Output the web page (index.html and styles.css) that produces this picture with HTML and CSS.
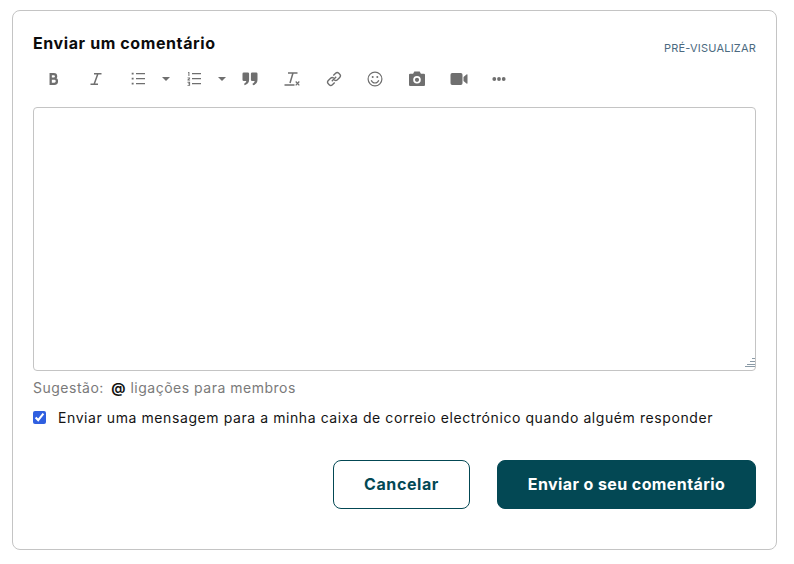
FILE: index.html
```html
<!DOCTYPE html>
<html lang="pt">
<head>
<meta charset="utf-8">
<title>Enviar um comentário</title>
<link rel="stylesheet" href="styles.css">
</head>
<body>
<form class="card">
  <div class="head">
    <h2 class="title">Enviar um comentário</h2>
    <a class="preview">PRÉ-VISUALIZAR</a>
  </div>
  <div class="toolbar">
    <span class="tool"><svg width="16" height="16" viewBox="0 0 16 16"><path fill="none" stroke="#6f6f6f" stroke-width="2.3" d="M4.700 2v12M4 3.100h3.800a2.200 2.200 0 0 1 0 4.600H4.700M4.700 7.700h3.600a2.600 2.600 0 0 1 0 5.200H4"/></svg></span>
    <span class="tool"><svg width="16" height="16" viewBox="0 0 16 16"><path fill="none" stroke="#6f6f6f" stroke-width="1.5" d="M6 2.700h7.500M2.500 13.300h7.500M9.900 2.700 6.100 13.300"/></svg></span>
    <span class="tool"><svg width="16" height="16" viewBox="0 0 16 16"><path fill="#6f6f6f" d="M1.700 1.800h1.900v1.700H1.700zM1.700 6.800h1.900v1.700H1.700zM1.700 11.800h1.900v1.700H1.700zM6 2h9v1.300H6zM6 7h9v1.300H6zM6 12h9v1.300H6z"/></svg></span>
    <span class="caret"></span>
    <span class="tool"><svg width="16" height="16" viewBox="0 0 16 16"><path fill="#6f6f6f" d="M6 2h9v1.300H6zM6 7h9v1.300H6zM6 12h9v1.300H6zM2.200 1h1.200v4H2.400V2H2zM1.500 6.500h2.600v.9L2.700 8.600h1.400v.8H1.500v-.8L3 7.300H1.500zM1.500 10.800h2.600v4H1.500V14h1.600v-.7H2v-.7h1.100v-.9H1.500z"/></svg></span>
    <span class="caret"></span>
    <span class="tool"><svg width="16" height="16" viewBox="0 0 16 16"><path fill="#6f6f6f" d="M1.800 1.500h4a1.300 1.300 0 0 1 1.300 1.300v6c0 2.800-1.600 4.600-4.400 5.400l-.7-1.500c1.400-.6 2.200-1.500 2.300-2.700H1.800A1.300 1.300 0 0 1 .5 8.700V2.800a1.300 1.300 0 0 1 1.300-1.300zM10.200 1.500h4a1.300 1.300 0 0 1 1.300 1.300v6c0 2.800-1.600 4.600-4.400 5.400l-.7-1.500c1.400-.6 2.200-1.500 2.300-2.700h-2.500a1.300 1.300 0 0 1-1.300-1.300V2.800a1.300 1.300 0 0 1 1.300-1.300z"/></svg></span>
    <span class="tool"><svg width="18" height="16" viewBox="0 0 18 16"><path fill="none" stroke="#6f6f6f" stroke-width="1.500" d="M5 2h9.500M10 2 7 12M1.500 14h10"/><path fill="none" stroke="#6f6f6f" stroke-width="1.200" d="m12.700 10.500 3.600 3.800M16.300 10.500l-3.600 3.800"/></svg></span>
    <span class="tool"><svg width="16" height="16" viewBox="0 0 16 16"><g fill="none" stroke="#6f6f6f" stroke-width="1.400"><path d="M7.300 4.600 9.600 2.300a2.300 2.300 0 0 1 3.200 0l.9.9a2.300 2.300 0 0 1 0 3.200l-2.300 2.300a2.300 2.300 0 0 1-3.200 0"/><path d="M8.700 11.400 6.400 13.700a2.300 2.300 0 0 1-3.200 0l-.9-.9a2.300 2.300 0 0 1 0-3.200l2.300-2.300a2.300 2.300 0 0 1 3.200 0"/><path d="m5.800 10.200 4.400-4.400"/></g></svg></span>
    <span class="tool tool-narrow"><svg width="16" height="16" viewBox="0 0 16 16"><circle cx="8" cy="8" r="6.900" fill="none" stroke="#6f6f6f" stroke-width="1.200"/><circle cx="5.700" cy="6" r="1" fill="#6f6f6f"/><circle cx="10.300" cy="6" r="1" fill="#6f6f6f"/><path fill="none" stroke="#6f6f6f" stroke-width="1.200" d="M4.200 9.300c.7 1.800 2.100 2.700 3.800 2.700s3.100-.9 3.800-2.700"/></svg></span>
    <span class="tool"><svg width="18" height="16" viewBox="0 0 18 16"><path fill="#6f6f6f" fill-rule="evenodd" d="M6.300 .5h5.400l1.200 2.200h3A1.100 1.100 0 0 1 17 3.800v10.100a1.100 1.100 0 0 1-1.100 1.100H2.100A1.100 1.100 0 0 1 1 13.900V3.800a1.100 1.100 0 0 1 1.100-1.100h3zM9 5a3.800 3.800 0 1 0 0 7.600A3.800 3.800 0 0 0 9 5zM9 6.700a2.100 2.100 0 1 1 0 4.200 2.100 2.100 0 0 1 0-4.200z"/></svg></span>
    <span class="tool"><svg width="18" height="16" viewBox="0 0 18 16"><path fill="#6f6f6f" d="M2.200 2h8.600a1.700 1.700 0 0 1 1.700 1.700v8.600a1.700 1.700 0 0 1-1.700 1.700H2.200a1.700 1.700 0 0 1-1.700-1.700V3.700A1.700 1.700 0 0 1 2.200 2zM13.500 6l3-2.600a.6.6 0 0 1 1 .4v8.400a.6.6 0 0 1-1 .4l-3-2.600z"/></svg></span>
    <span class="tool tool-dots"><svg width="14" height="16" viewBox="0 0 14 16"><circle cx="2.300" cy="8" r="1.900" fill="#6f6f6f"/><circle cx="7" cy="8" r="1.900" fill="#6f6f6f"/><circle cx="11.700" cy="8" r="1.900" fill="#6f6f6f"/></svg></span>
  </div>
  <div class="editor">
    <textarea class="input"></textarea>
    <svg class="grip" width="11" height="12" viewBox="0 0 11 12"><path fill="#8a9aa6" d="M8 0h3v1H8zM6 3h5v1H6zM3 6h8v1H3zM1 8h10v1H1z"/></svg>
  </div>
  <p class="hint">Sugestão: <b class="at">@</b> ligações para membros</p>
  <label class="notify"><input class="check" type="checkbox" checked><span>Enviar uma mensagem para a minha caixa de correio electrónico quando alguém responder</span></label>
  <div class="actions">
    <button type="button" class="btn btn-ghost">Cancelar</button>
    <button type="button" class="btn btn-solid">Enviar o seu comentário</button>
  </div>
</form>
</body>
</html>
```
FILE: styles.css
```css
html, body { margin: 0; padding: 0; background: #fff; }
body { font-family: Inter, "Open Sans", sans-serif; width: 794px; height: 564px; overflow: hidden; color: #111; }
.card { box-sizing: border-box; width: 765px; height: 540px; margin: 10px 0 0 12px; padding: 22px 20px 40px 20px; border: 1px solid #c4c4c4; border-radius: 8px; }
.head { display: flex; justify-content: space-between; align-items: flex-start; height: 31px; }
.title { margin: 0; font-size: 16px; line-height: 21px; font-weight: 700; color: #0c0c0c; letter-spacing: .6px; }
.preview { font-size: 11px; line-height: 16px; margin-top: 7px; color: #4c6a80; letter-spacing: .2px; font-weight: 400; }
.toolbar { display: flex; align-items: center; height: 30px; }
.tool { flex: 0 0 42px; display: flex; align-items: center; justify-content: center; height: 30px; }
.tool-narrow { box-sizing: border-box; flex-basis: 41px; padding-right: 2px; }
.tool-dots { flex-basis: 38px; }
.caret { flex: 0 0 14px; display: flex; justify-content: center; }
.caret::before { content: ""; border-left: 4px solid transparent; border-right: 4px solid transparent; border-top: 4px solid #6f6f6f; }
.editor { position: relative; margin-top: 13px; }
.input { display: block; box-sizing: border-box; width: 723px; height: 264px; margin: 0; padding: 8px; border: 1px solid #c4c4c4; border-radius: 4px; background: #fff; outline: none; resize: none; }
.grip { position: absolute; right: 1px; bottom: 1px; }
.hint { margin: 7px 0 0; font-size: 14px; line-height: 20px; color: #7a7a7a; letter-spacing: .5px; }
.at { color: #111; font-weight: 700; margin-left: 3px; }
.notify { display: flex; align-items: center; gap: 12px; margin-top: 9px; height: 21px; font-size: 14px; line-height: 21px; color: #141414; letter-spacing: .58px; }
.check { margin: 0; width: 13px; height: 13px; accent-color: #2f5fe0; }
.actions { display: flex; justify-content: flex-end; gap: 27px; margin-top: 32px; }
.btn { box-sizing: border-box; height: 49px; padding: 0 0 2px; border-radius: 8px; font-family: inherit; font-size: 16px; font-weight: 700; cursor: pointer; }
.btn-ghost { width: 137px; background: #fff; color: #034854; border: 1px solid #034854; letter-spacing: .6px; }
.btn-solid { width: 259px; background: #034854; color: #fff; border: 1px solid #034854; letter-spacing: .4px; }
```
